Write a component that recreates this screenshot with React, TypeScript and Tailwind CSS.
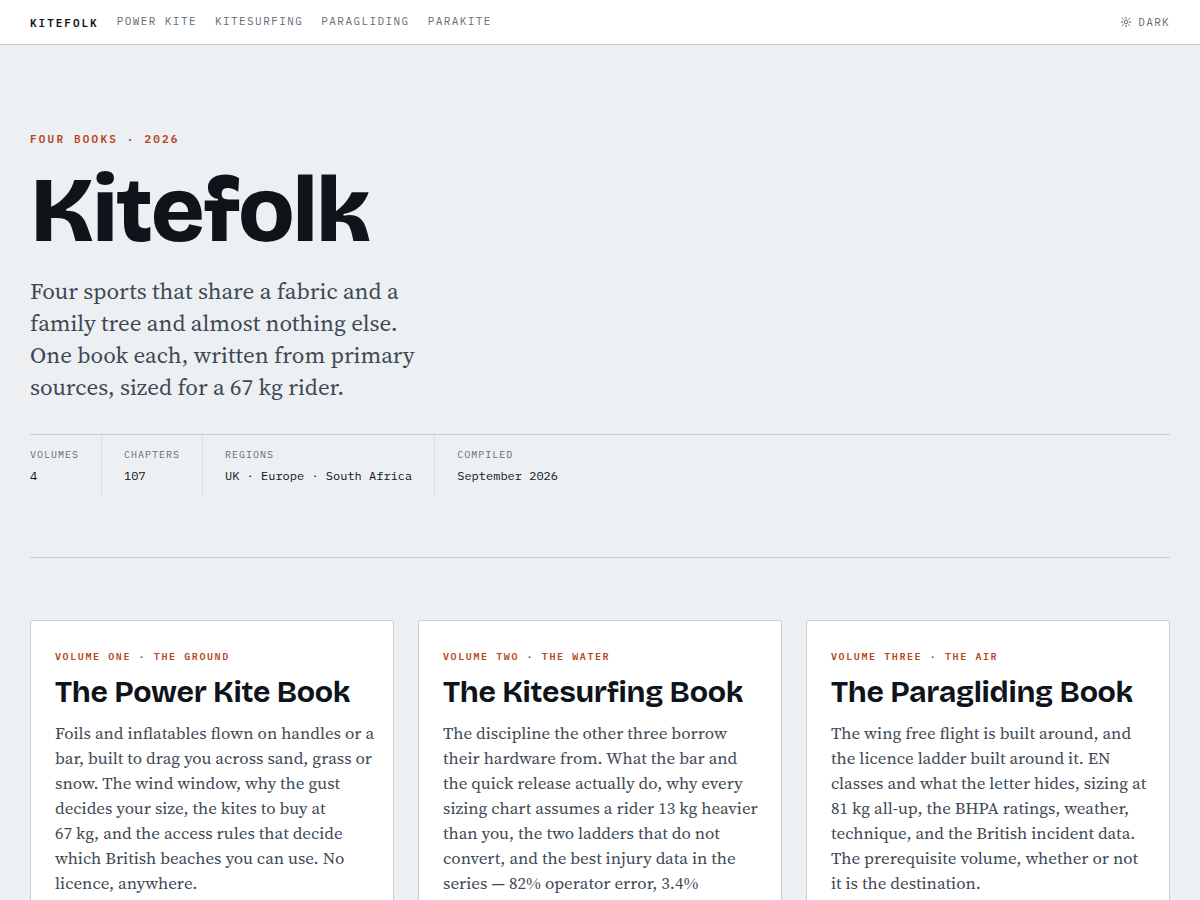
import { useState } from 'react'

const NAV = ['Power Kite', 'Kitesurfing', 'Paragliding', 'Parakite']

const FACTS = [
  { label: 'Volumes', value: '4' },
  { label: 'Chapters', value: '107' },
  { label: 'Regions', value: 'UK · Europe · South Africa' },
  { label: 'Compiled', value: 'September 2026' },
]

const BOOKS = [
  {
    id: 'power-kite',
    eyebrow: 'Volume One · The Ground',
    title: 'The Power Kite Book',
    text: `Foils and inflatables flown on handles or a
bar, built to drag you across sand, grass or
snow. The wind window, why the gust
decides your size, the kites to buy at
67 kg, and the access rules that decide
which British beaches you can use. No
licence, anywhere.`,
  },
  {
    id: 'kitesurfing',
    eyebrow: 'Volume Two · The Water',
    title: 'The Kitesurfing Book',
    text: `The discipline the other three borrow
their hardware from. What the bar and
the quick release actually do, why every
sizing chart assumes a rider 13 kg heavier
than you, the two ladders that do not
convert, and the best injury data in the
series — 82% operator error, 3.4%`,
  },
  {
    id: 'paragliding',
    eyebrow: 'Volume Three · The Air',
    title: 'The Paragliding Book',
    text: `The wing free flight is built around, and
the licence ladder built around it. EN
classes and what the letter hides, sizing at
81 kg all-up, the BHPA ratings, weather,
technique, and the British incident data.
The prerequisite volume, whether or not
it is the destination.`,
  },
]

const MONO = "font-['IBM_Plex_Mono','Liberation_Mono',monospace]"
const SERIF = "font-['Source_Serif_4','Noto_Serif_CJK_SC','Liberation_Serif',serif]"
const DISPLAY = "font-['Bricolage_Grotesque','Inter','Liberation_Sans',sans-serif]"

function SunIcon() {
  return (
    <svg viewBox="0 0 12 12" className="w-3 h-3" fill="none" stroke="currentColor" aria-hidden="true">
      <circle cx="6" cy="6" r="1.8" />
      <path d="M6 .8v2.4M6 8.8v2.4M.8 6h2.4M8.8 6h2.4M2 2l1.6 1.6M8.4 8.4L10 10M10 2L8.4 3.6M3.6 8.4L2 10" />
    </svg>
  )
}

function Header() {
  const [dark, setDark] = useState(true)

  return (
    <header className="bg-white border-b border-[#c5cfd6]">
      <div className={`flex items-center justify-between h-11 px-[30px] text-[11px] uppercase ${MONO}`}>
        <div className="flex items-center gap-[18px]">
          <a href="#top" className="pt-0.5 font-semibold tracking-[0.18em] text-[#0f141a]">
            Kitefolk
          </a>
          <nav className="flex gap-[18px]">
            {NAV.map((n) => (
              <a key={n} href={`#${n}`} className="border-b-2 border-transparent tracking-[0.13em] text-[#5f6d78]">
                {n}
              </a>
            ))}
          </nav>
        </div>
        <button onClick={() => setDark(!dark)} className="flex items-center gap-1.5 uppercase tracking-[0.12em] text-[#5f6d78]">
          <SunIcon />
          {dark ? 'Dark' : 'Light'}
        </button>
      </div>
    </header>
  )
}

function Hero() {
  return (
    <section className="pt-[86px] pb-[60px] border-b border-[#c5cfd6]">
      <p className={`text-[11px] leading-4 font-semibold uppercase tracking-[0.2em] text-[#b9461b] ${MONO}`}>
        Four Books · 2026
      </p>
      <h1 className={`mt-5 text-[92px] leading-[88px] font-extrabold tracking-tight text-[#0f141a] ${DISPLAY}`}>
        Kitefolk
      </h1>
      <p className={`mt-5 max-w-[410px] text-[23px] leading-8 text-[#3d4853] ${SERIF}`}>
        Four sports that share a fabric and a family tree and almost nothing else. One book each, written from primary
        sources, sized for a 67&nbsp;kg rider.
      </p>
      <dl className={`mt-[31px] flex flex-wrap border-t border-[#c5cfd6] ${MONO}`}>
        {FACTS.map((f) => (
          <div key={f.label} className="pt-3 pb-3 pr-[22px] mr-[22px] border-r border-[#d9e0e5] last:border-r-0 last:mr-0">
            <dt className="text-[10px] leading-4 uppercase tracking-widest text-[#5f6d78]">{f.label}</dt>
            <dd className="mt-1 text-[12px] leading-[18px] text-[#0f141a]">{f.value}</dd>
          </div>
        ))}
      </dl>
    </section>
  )
}

export default function App() {
  return (
    <div id="top" className="min-h-screen bg-[#ecf0f3]">
      <Header />
      <main className="px-[30px] pb-16">
        <Hero />
        <div className="grid grid-cols-3 gap-6 mt-[62px]">
          {BOOKS.map((b) => (
            <article key={b.id} id={b.id} className="bg-white border border-[#c5cfd6] rounded-xs pl-6 pr-3 pt-7 pb-8">
              <p className={`text-[10px] leading-4 font-semibold uppercase tracking-[0.16em] text-[#b9461b] ${MONO}`}>
                {b.eyebrow}
              </p>
              <h2 className={`mt-2 text-[30px] leading-[38px] font-bold tracking-[-0.01em] text-[#0f141a] ${DISPLAY}`}>
                {b.title}
              </h2>
              <p className={`mt-2.5 whitespace-pre-line text-[17px] leading-[25px] text-[#3d4853] ${SERIF}`}>{b.text}</p>
            </article>
          ))}
        </div>
      </main>
    </div>
  )
}
